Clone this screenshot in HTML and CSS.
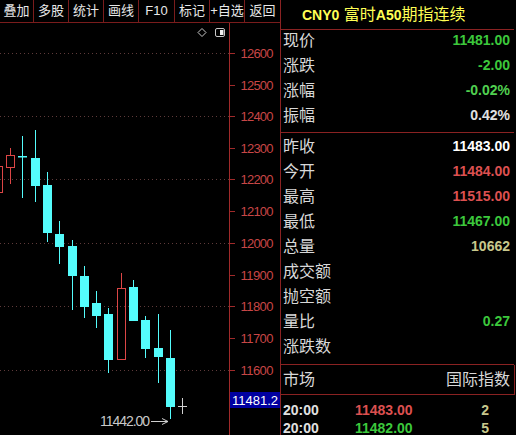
FILE: index.html
```html
<!DOCTYPE html>
<html>
<head>
<meta charset="utf-8">
<link rel="stylesheet" href="styles.css">
</head>
<body>
<div class="app">
  <div class="left">
    <div class="toolbar">
      <div class="btn w34">叠加</div>
      <div class="btn w35">多股</div>
      <div class="btn w35">统计</div>
      <div class="btn w35">画线</div>
      <div class="btn w36">F10</div>
      <div class="btn w35">标记</div>
      <div class="btn w35">+自选</div>
      <div class="btn w35 last">返回</div>
    </div>
    <div class="chart">
      <svg width="280" height="412" viewBox="0 23 280 412" xmlns="http://www.w3.org/2000/svg">
        <!-- icons -->
        <polygon class="ico" points="202,28.5 206,32.5 202,36.5 198,32.5"/>
        <rect class="ico" x="215.5" y="28.5" width="9" height="8" rx="1.5"/>
        <rect class="icofill" x="220" y="30" width="3.5" height="5"/>
        <!-- grid -->
        <line class="grid" x1="0" y1="53.5" x2="229" y2="53.5"/>
        <line class="grid" x1="0" y1="116.5" x2="229" y2="116.5"/>
        <line class="grid" x1="0" y1="179.5" x2="229" y2="179.5"/>
        <line class="grid" x1="0" y1="243.5" x2="229" y2="243.5"/>
        <line class="grid" x1="0" y1="306.5" x2="229" y2="306.5"/>
        <line class="grid" x1="0" y1="370.5" x2="229" y2="370.5"/>
        <!-- axis -->
        <line class="axis" x1="229.5" y1="23" x2="229.5" y2="435"/>
        <g class="ticks">
          <line x1="230" y1="53.5" x2="235" y2="53.5"/>
          <line x1="230" y1="85.5" x2="235" y2="85.5"/>
          <line x1="230" y1="116.5" x2="235" y2="116.5"/>
          <line x1="230" y1="148.5" x2="235" y2="148.5"/>
          <line x1="230" y1="179.5" x2="235" y2="179.5"/>
          <line x1="230" y1="211.5" x2="235" y2="211.5"/>
          <line x1="230" y1="243.5" x2="235" y2="243.5"/>
          <line x1="230" y1="275.5" x2="235" y2="275.5"/>
          <line x1="230" y1="306.5" x2="235" y2="306.5"/>
          <line x1="230" y1="338.5" x2="235" y2="338.5"/>
          <line x1="230" y1="370.5" x2="235" y2="370.5"/>
        </g>
        <g class="alabel">
          <text x="240.5" y="58" textLength="33">12600</text>
          <text x="240.5" y="90" textLength="33">12500</text>
          <text x="240.5" y="121" textLength="33">12400</text>
          <text x="240.5" y="153" textLength="33">12300</text>
          <text x="240.5" y="184" textLength="33">12200</text>
          <text x="240.5" y="216" textLength="33">12100</text>
          <text x="240.5" y="248" textLength="33">12000</text>
          <text x="240.5" y="280" textLength="33">11900</text>
          <text x="240.5" y="311" textLength="33">11800</text>
          <text x="240.5" y="343" textLength="33">11700</text>
          <text x="240.5" y="375" textLength="33">11600</text>
        </g>
        <rect class="curbox" x="230" y="392" width="51" height="16"/>
        <text class="curtxt" x="232" y="405" textLength="46">11481.2</text>
        <!-- candles: red hollow -->
        <g class="up">
          <rect x="-5.5" y="166.5" width="8" height="26"/>
          <line x1="10.5" y1="148" x2="10.5" y2="155"/>
          <rect x="6.5" y="155.5" width="8" height="12"/>
          <line x1="10.5" y1="168" x2="10.5" y2="184"/>
          <line x1="121.5" y1="273" x2="121.5" y2="288"/>
          <rect x="117.5" y="288.5" width="8" height="71"/>
        </g>
        <!-- candles: cyan -->
        <g class="dn">
          <rect x="22" y="136" width="1" height="62"/>
          <rect x="18" y="156" width="9" height="1.5"/>
          <rect x="35" y="130" width="1" height="72"/>
          <rect x="31" y="158" width="9" height="28"/>
          <rect x="47" y="172" width="1" height="70"/>
          <rect x="43" y="185" width="9" height="48"/>
          <rect x="59" y="221" width="1" height="43"/>
          <rect x="55" y="234" width="9" height="13"/>
          <rect x="72" y="240" width="1" height="70"/>
          <rect x="68" y="246" width="9" height="30"/>
          <rect x="84" y="266" width="1" height="52"/>
          <rect x="80" y="276" width="9" height="31"/>
          <rect x="96" y="291" width="1" height="37"/>
          <rect x="92" y="303" width="9" height="13"/>
          <rect x="108" y="308" width="1" height="65"/>
          <rect x="104" y="314" width="9" height="46"/>
          <rect x="133" y="280" width="1" height="41"/>
          <rect x="129" y="287" width="9" height="34"/>
          <rect x="145" y="316" width="1" height="42"/>
          <rect x="141" y="320" width="9" height="29"/>
          <rect x="158" y="314" width="1" height="69"/>
          <rect x="154" y="348" width="9" height="9"/>
          <rect x="170" y="330" width="1" height="89"/>
          <rect x="166" y="358" width="9" height="49"/>
        </g>
        <!-- annotation -->
        <line class="mark" x1="178" y1="406.5" x2="187" y2="406.5"/>
        <line class="mark" x1="182.5" y1="398" x2="182.5" y2="414"/>
        <text class="note" x="100" y="426" textLength="50">11442.00</text>
        <line class="mark" x1="151" y1="421.5" x2="168" y2="421.5"/>
        <polyline class="mark" points="162,418.5 168,421.5 162,424.5"/>
      </svg>
    </div>
  </div>
  <div class="quote">
    <div class="title"><b>CNY0</b> 富时<b>A50</b>期指连续</div>
    <div class="sec sec1">
      <div class="row"><span>现价</span><span class="v green">11481.00</span></div>
      <div class="row"><span>涨跌</span><span class="v green">-2.00</span></div>
      <div class="row"><span>涨幅</span><span class="v green2">-0.02%</span></div>
      <div class="row"><span>振幅</span><span class="v gray">0.42%</span></div>
    </div>
    <div class="sec sec2">
      <div class="row"><span>昨收</span><span class="v white">11483.00</span></div>
      <div class="row"><span>今开</span><span class="v red">11484.00</span></div>
      <div class="row"><span>最高</span><span class="v red">11515.00</span></div>
      <div class="row"><span>最低</span><span class="v green">11467.00</span></div>
      <div class="row"><span>总量</span><span class="v khaki">10662</span></div>
      <div class="row"><span>成交额</span><span class="v"></span></div>
      <div class="row"><span>抛空额</span><span class="v"></span></div>
      <div class="row"><span>量比</span><span class="v green">0.27</span></div>
      <div class="row"><span>涨跌数</span><span class="v"></span></div>
    </div>
    <div class="market"><span>市场</span><span>国际指数</span></div>
    <div class="trades">
      <div class="trow"><span class="tm">20:00</span><span class="red">11483.00</span><span class="khaki vol">2</span></div>
      <div class="trow"><span class="tm">20:00</span><span class="green">11482.00</span><span class="khaki vol">5</span></div>
    </div>
  </div>
</div>
</body>
</html>
```
FILE: styles.css
```css
html, body {
  margin: 0;
  padding: 0;
  background: #000;
}
body {
  width: 516px;
  height: 435px;
  overflow: hidden;
  font-family: "Liberation Sans", "Noto Sans CJK SC", sans-serif;
  color: #d8d8d8;
}
.app {
  display: flex;
  width: 516px;
  height: 435px;
}
.left {
  width: 280px;
  display: flex;
  flex-direction: column;
}
.toolbar {
  display: flex;
  height: 22px;
  border-bottom: 1px solid #7a1c1c;
}
.btn {
  box-sizing: border-box;
  height: 22px;
  border-right: 1px solid #7a1c1c;
  font-size: 13px;
  line-height: 22px;
  text-align: center;
  color: #e8e8e8;
  white-space: nowrap;
}
.btn.last { border-right: none; }
.w34 { width: 34px; }
.w35 { width: 35px; }
.w36 { width: 36px; }
.chart {
  height: 412px;
}
.chart svg { display: block; }
.ico { fill: none; stroke: #c8c8c8; stroke-width: 1; }
.icofill { fill: #f0f0f0; }
.grid { stroke: #5e3a3a; stroke-width: 1; stroke-dasharray: 1 3; }
.axis { stroke: #a02a2a; stroke-width: 1; }
.ticks line { stroke: #a02a2a; stroke-width: 1; }
.alabel text {
  font-family: "Liberation Sans", sans-serif;
  font-size: 13px;
  fill: #c84646;
}
.curbox { fill: #0000a0; }
.curtxt {
  font-family: "Liberation Sans", sans-serif;
  font-size: 13px;
  fill: #ffffff;
}
.up rect { fill: none; stroke: #dc4646; stroke-width: 1; }
.up line { stroke: #dc4646; stroke-width: 1; }
.dn rect { fill: #54fcfc; }
.mark { stroke: #d0d0d0; stroke-width: 1; fill: none; }
.note {
  font-family: "Liberation Sans", sans-serif;
  font-size: 14px;
  fill: #c8c8c8;
}
.quote {
  width: 235px;
  border-left: 1px solid #8a2222;
  display: flex;
  flex-direction: column;
}
.title {
  height: 29px;
  line-height: 29px;
  border-bottom: 1px solid #8a2222;
  margin-right: 2px;
  padding-left: 21px;
  color: #ffff55;
  font-size: 16px;
  white-space: nowrap;
}
.title b { font-size: 14px; font-weight: bold; }
.sec {
  margin-right: 2px;
  border-bottom: 1px solid #8a2222;
}
.sec1 { padding: 0 0 2px 0; }
.sec2 { padding: 3px 0 3px 0; }
.row {
  height: 25px;
  line-height: 21px;
  display: flex;
  justify-content: space-between;
  padding: 0 4px 0 2px;
  font-size: 16px;
  color: #d8d8d8;
}
.v {
  font-size: 14px;
  font-weight: bold;
}
.green { color: #3cc83c; }
.green2 { color: #50d050; }
.red { color: #dc5050; }
.white { color: #ffffff; }
.gray { color: #e0e0e0; }
.khaki { color: #c8c88c; }
.market {
  height: 29px;
  line-height: 29px;
  margin-right: 1px;
  border-bottom: 1px solid #8a2222;
  border-right: 1px solid #8a2222;
  display: flex;
  justify-content: space-between;
  padding: 0 4px 0 2px;
  font-size: 16px;
  color: #d8d8d8;
}
.trades {
  padding-top: 6px;
}
.trow {
  height: 18px;
  line-height: 18px;
  display: grid;
  grid-template-columns: 72px 1fr auto;
  padding: 0 27px 0 2px;
  font-size: 14px;
  font-weight: bold;
}
.tm { color: #e0e0e0; }
.vol { text-align: right; }
```
